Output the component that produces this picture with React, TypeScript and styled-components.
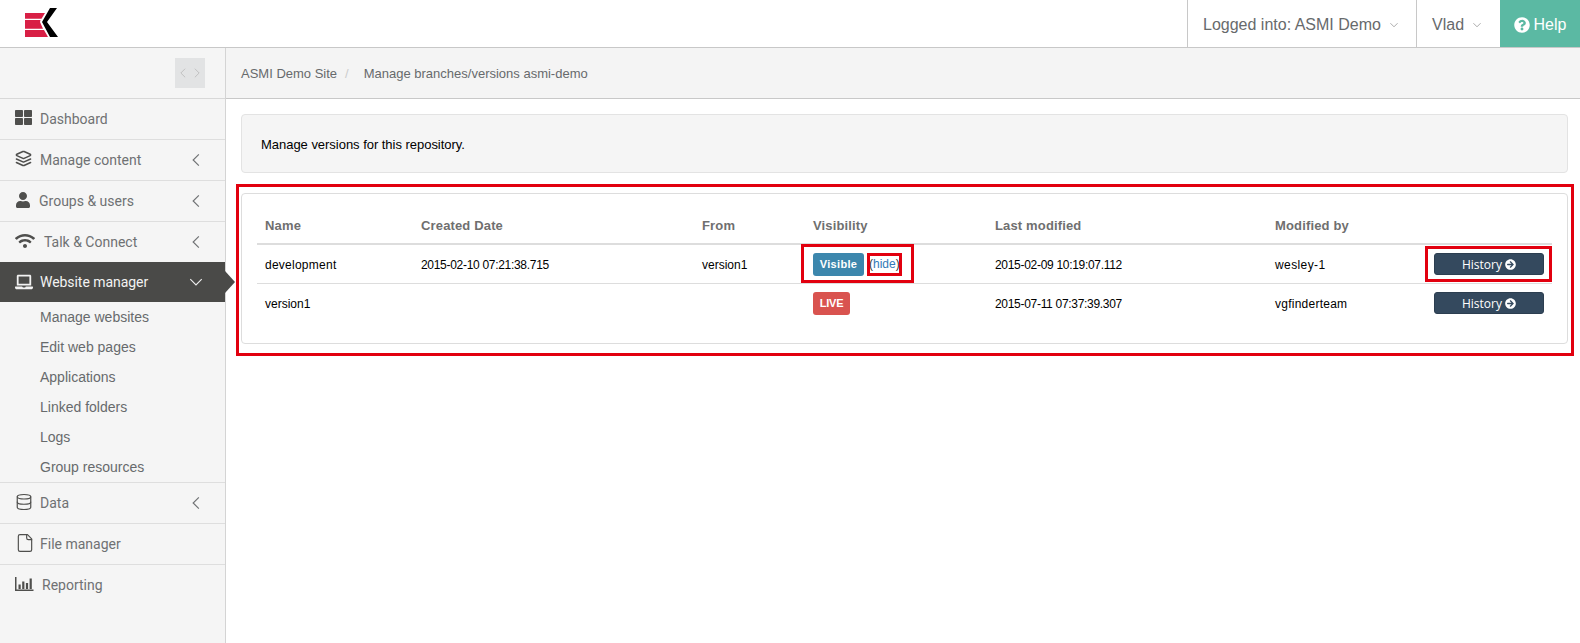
import React from "react";
import styled, { createGlobalStyle } from "styled-components";
import { FaThLarge, FaUser, FaWifi, FaLaptop, FaQuestionCircle, FaArrowCircleRight } from "react-icons/fa";
import { LuLayers, LuDatabase, LuFile } from "react-icons/lu";

const Global = createGlobalStyle`
  html, body { margin: 0; padding: 0; background: #fff; height: 100%; overflow: hidden; }
  * { box-sizing: border-box; }
  #root { height: 643px; }
`;

const Page = styled.div`
  position: relative;
  width: 1580px;
  height: 643px;
  display: flex;
  flex-direction: column;
  font-family: "Liberation Sans", Arial, sans-serif;
  overflow: hidden;
`;
const TopBar = styled.header`
  height: 48px;
  flex: none;
  display: flex;
  align-items: stretch;
  border-bottom: 1px solid #c8c8c8;
  background: #fff;
`;
const LogoWrap = styled.div`
  width: 225px;
  padding: 8px 0 0 25px;
  margin-right: auto;
`;
const TopItem = styled.div<{ $w: number }>`
  width: ${(p) => p.$w}px;
  border-left: 1px solid #c8c8c8;
  display: flex;
  align-items: center;
  gap: 8px;
  padding: 2px 0 0 15px;
  font-size: 16px;
  color: #676a6c;
`;
const HelpItem = styled.div`
  width: 80px;
  background: #5bb9a3;
  color: #fff;
  display: flex;
  align-items: center;
  justify-content: center;
  gap: 4px;
  padding-top: 2px;
  font-size: 16px;
`;
const Body = styled.div`
  flex: 1;
  display: flex;
  min-height: 0;
`;
const Sidebar = styled.nav`
  width: 226px;
  flex: none;
  background: #f5f5f5;
  border-right: 1px solid #d4d4d4;
  font-family: Roboto, sans-serif;
`;
const ToggleBar = styled.div`
  height: 51px;
  border-bottom: 1px solid #d8d8d8;
  padding: 10px 20px 0 0;
  display: flex;
  justify-content: flex-end;
`;
const Toggle = styled.div`
  width: 30px;
  height: 30px;
  background: #e2e3e4;
  display: flex;
  align-items: center;
  justify-content: space-around;
  padding: 0 1px;
`;
const MenuItem = styled.div<{ $flat?: boolean }>`
  height: ${(p) => (p.$flat ? 40 : 41)}px;
  display: flex;
  align-items: center;
  padding-left: 15px;
  border-bottom: ${(p) => (p.$flat ? "0" : "1px solid #dedede")};
  color: #6f7173;
  font-size: 14px;
`;
const ActiveItem = styled.div`
  position: relative;
  height: 40px;
  display: flex;
  align-items: center;
  padding-left: 15px;
  background: #4a4a48;
  color: #f2f2f2;
  font-size: 14px;
  letter-spacing: -0.05px;
`;
const MenuIcon = styled.span<{ $w: number }>`
  width: ${(p) => p.$w}px;
  flex: none;
  display: flex;
  align-items: center;
  color: #4f4f4d;
  margin-top: -3px;
`;
const ActiveIcon = styled.span`
  width: 25px;
  flex: none;
  display: flex;
  align-items: center;
`;
const Arrow = styled.span`
  margin-left: auto;
  margin-right: 21px;
  display: flex;
`;
const Notch = styled.span`
  position: absolute;
  right: -10px;
  top: 9px;
  width: 0;
  height: 0;
  border-top: 11px solid transparent;
  border-bottom: 11px solid transparent;
  border-left: 10px solid #4a4a48;
`;
const SubList = styled.div`
  border-bottom: 1px solid #dedede;
`;
const SubItem = styled.div`
  height: 30px;
  display: flex;
  align-items: center;
  padding-left: 40px;
  font-family: "Liberation Sans", Arial, sans-serif;
  font-size: 14px;
  color: #676a6c;
`;
const Main = styled.main`
  flex: 1;
  min-width: 0;
`;
const Crumbs = styled.div`
  height: 51px;
  background: #f4f4f4;
  border-bottom: 1px solid #c8c8c8;
  display: flex;
  align-items: center;
  padding-left: 15px;
  font-size: 13px;
  color: #676a6c;
`;
const CrumbSep = styled.span`
  color: #ccc;
  margin: 0 15px 0 8px;
`;
const Content = styled.div`
  padding: 15px 12px 0 15px;
`;
const Well = styled.div`
  height: 59px;
  background: #f5f5f5;
  border: 1px solid #e3e3e3;
  border-radius: 4px;
  display: flex;
  align-items: center;
  padding: 2px 0 0 19px;
  font-size: 13px;
  letter-spacing: -0.03px;
  color: #000;
`;
const Card = styled.div`
  margin-top: 20px;
  height: 151px;
  border: 1px solid #ddd;
  border-radius: 4px;
  padding: 16px 15px 0 15px;
  background: #fff;
`;
const Table = styled.table`
  width: 1295px;
  table-layout: fixed;
  border-collapse: collapse;
  font-size: 12px;
  color: #000;
`;
const Col = styled.col<{ $w: number }>`
  width: ${(p) => p.$w}px;
`;
const Th = styled.th`
  height: 34px;
  padding: 0 8px 2px;
  text-align: left;
  font-size: 13px;
  font-weight: bold;
  letter-spacing: 0.15px;
  color: #6f6f6f;
  border-bottom: 2px solid #ddd;
`;
const Td = styled.td<{ $spacing?: number }>`
  height: 39px;
  padding: 2px 8px 0;
  letter-spacing: ${(p) => p.$spacing ?? 0}px;
`;
const ControlTd = styled.td`
  height: 39px;
  padding: 1px 8px 0;
`;
const Tr = styled.tr`
  & + & > td { border-top: 1px solid #ddd; }
`;
const Badge = styled.span<{ $bg: string; $w: number; $spacing: number }>`
  display: inline-flex;
  align-items: center;
  justify-content: center;
  width: ${(p) => p.$w}px;
  height: 23px;
  border-radius: 3px;
  background: ${(p) => p.$bg};
  color: #fff;
  font-size: 11px;
  font-weight: bold;
  letter-spacing: ${(p) => p.$spacing}px;
  vertical-align: middle;
`;
const HideLink = styled.span`
  margin-left: 5px;
  vertical-align: middle;
  color: #333;
`;
const Link = styled.span`
  color: #337ab7;
`;
const HistoryBtn = styled.div`
  width: 110px;
  height: 22px;
  border-radius: 3px;
  background: #34495e;
  border: 1px solid #2c3e50;
  color: #fff;
  font-family: "Open Sans", sans-serif;
  font-size: 12px;
  display: flex;
  align-items: center;
  justify-content: center;
  gap: 3px;
`;
const Annotation = styled.div<{ $x: number; $y: number; $w: number; $h: number }>`
  position: absolute;
  left: ${(p) => p.$x}px;
  top: ${(p) => p.$y}px;
  width: ${(p) => p.$w}px;
  height: ${(p) => p.$h}px;
  border: 3px solid #e2000f;
  pointer-events: none;
`;

const Chevron = ({ dir, size = 16, color = "#6f7173" }: { dir: "l" | "r" | "d"; size?: number; color?: string }) => (
  <svg width={size} height={size} viewBox="0 0 14 14" fill="none" stroke={color} strokeWidth={1}>
    {dir === "l" && <path d="M9.5 2 4.5 7l5 5" />}
    {dir === "r" && <path d="M4.5 2l5 5-5 5" />}
    {dir === "d" && <path d="M2 4.5l5 5 5-5" />}
  </svg>
);

const Logo = () => (
  <svg width="34" height="30" viewBox="0 0 34 30">
    <path d="M0 5H20L16.5 10.7H0Z" fill="#d81f45" />
    <path d="M0 12H15.5L15 14 18 20.7H0Z" fill="#d81f45" />
    <path d="M0 22H19L23 29H0Z" fill="#d81f45" />
    <path d="M25 0H32L22 14 33 29H25L17 14Z" fill="#000" />
  </svg>
);

const ChartIcon = () => (
  <svg width="19" height="14" viewBox="0 0 19 14" fill="none">
    <path d="M.75 0V13.25H18.5" stroke="#4f4f4d" strokeWidth="1.5" />
    <path d="M3.5 7.5h2.2V12H3.5ZM7.2 4.5h2.2V12H7.2ZM10.9 6h2.2v6h-2.2ZM14.6 1.5h2.2V12h-2.2Z" fill="#4f4f4d" />
  </svg>
);

const items1 = [
  { label: "Dashboard", icon: <FaThLarge size={17} />, w: 25 },
  { label: "Manage content", icon: <LuLayers size={17} strokeWidth={2.2} />, w: 25, arrow: true },
  { label: "Groups & users", icon: <FaUser size={16} />, w: 24, arrow: true },
  { label: "Talk & Connect", icon: <FaWifi size={20} />, w: 29, arrow: true, flat: true },
];
const subs = ["Manage websites", "Edit web pages", "Applications", "Linked folders", "Logs", "Group resources"];
const items2 = [
  { label: "Data", icon: <LuDatabase size={18} strokeWidth={1.6} />, w: 25, arrow: true },
  { label: "File manager", icon: <LuFile size={20} strokeWidth={1.4} />, w: 25 },
  { label: "Reporting", icon: <ChartIcon />, w: 27, flat: true },
];
const cols = [156, 281, 111, 182, 280, 159, 126];

const Item = ({ label, icon, w, arrow, flat }: { label: string; icon: React.ReactNode; w: number; arrow?: boolean; flat?: boolean }) => (
  <MenuItem $flat={flat}>
    <MenuIcon $w={w}>{icon}</MenuIcon>
    {label}
    {arrow && <Arrow><Chevron dir="l" /></Arrow>}
  </MenuItem>
);

const History = () => (
  <HistoryBtn>
    History <FaArrowCircleRight size={11} />
  </HistoryBtn>
);

export default function App() {
  return (
    <Page>
      <Global />
      <TopBar>
        <LogoWrap><Logo /></LogoWrap>
        <TopItem $w={229}>Logged into: ASMI Demo <Chevron dir="d" size={10} color="#888" /></TopItem>
        <TopItem $w={84}>Vlad <Chevron dir="d" size={10} color="#888" /></TopItem>
        <HelpItem><FaQuestionCircle size={16} /> Help</HelpItem>
      </TopBar>
      <Body>
        <Sidebar>
          <ToggleBar>
            <Toggle>
              <Chevron dir="l" size={12} color="#bbb" />
              <Chevron dir="r" size={12} color="#bbb" />
            </Toggle>
          </ToggleBar>
          {items1.map((i) => <Item key={i.label} {...i} />)}
          <ActiveItem>
            <ActiveIcon><FaLaptop size={18} /></ActiveIcon>
            Website manager
            <Arrow><Chevron dir="d" color="#eee" /></Arrow>
            <Notch />
          </ActiveItem>
          <SubList>
            {subs.map((s) => <SubItem key={s}>{s}</SubItem>)}
          </SubList>
          {items2.map((i) => <Item key={i.label} {...i} />)}
        </Sidebar>
        <Main>
          <Crumbs>
            ASMI Demo Site<CrumbSep>/</CrumbSep>Manage branches/versions asmi-demo
          </Crumbs>
          <Content>
            <Well>Manage versions for this repository.</Well>
            <Card>
              <Table>
                <colgroup>{cols.map((w, i) => <Col key={i} $w={w} />)}</colgroup>
                <thead>
                  <tr>
                    <Th>Name</Th><Th>Created Date</Th><Th>From</Th><Th>Visibility</Th>
                    <Th>Last modified</Th><Th>Modified by</Th><Th />
                  </tr>
                </thead>
                <tbody>
                  <Tr>
                    <Td $spacing={0.25}>development</Td>
                    <Td $spacing={-0.3}>2015-02-10 07:21:38.715</Td>
                    <Td>version1</Td>
                    <ControlTd>
                      <Badge $bg="#3c87ad" $w={51} $spacing={0.3}>Visible</Badge>
                      <HideLink>(<Link>hide</Link>)</HideLink>
                    </ControlTd>
                    <Td $spacing={-0.3}>2015-02-09 10:19:07.112</Td>
                    <Td $spacing={0.4}>wesley-1</Td>
                    <ControlTd><History /></ControlTd>
                  </Tr>
                  <Tr>
                    <Td>version1</Td>
                    <Td />
                    <Td />
                    <ControlTd><Badge $bg="#d9534f" $w={37} $spacing={-0.2}>LIVE</Badge></ControlTd>
                    <Td $spacing={-0.3}>2015-07-11 07:37:39.307</Td>
                    <Td $spacing={0.25}>vgfinderteam</Td>
                    <ControlTd><History /></ControlTd>
                  </Tr>
                </tbody>
              </Table>
            </Card>
          </Content>
        </Main>
      </Body>
      <Annotation $x={236} $y={184} $w={1338} $h={172} />
      <Annotation $x={801} $y={244} $w={113} $h={39} />
      <Annotation $x={867} $y={253} $w={35} $h={23} />
      <Annotation $x={1425} $y={246} $w={127} $h={36} />
    </Page>
  );
}
